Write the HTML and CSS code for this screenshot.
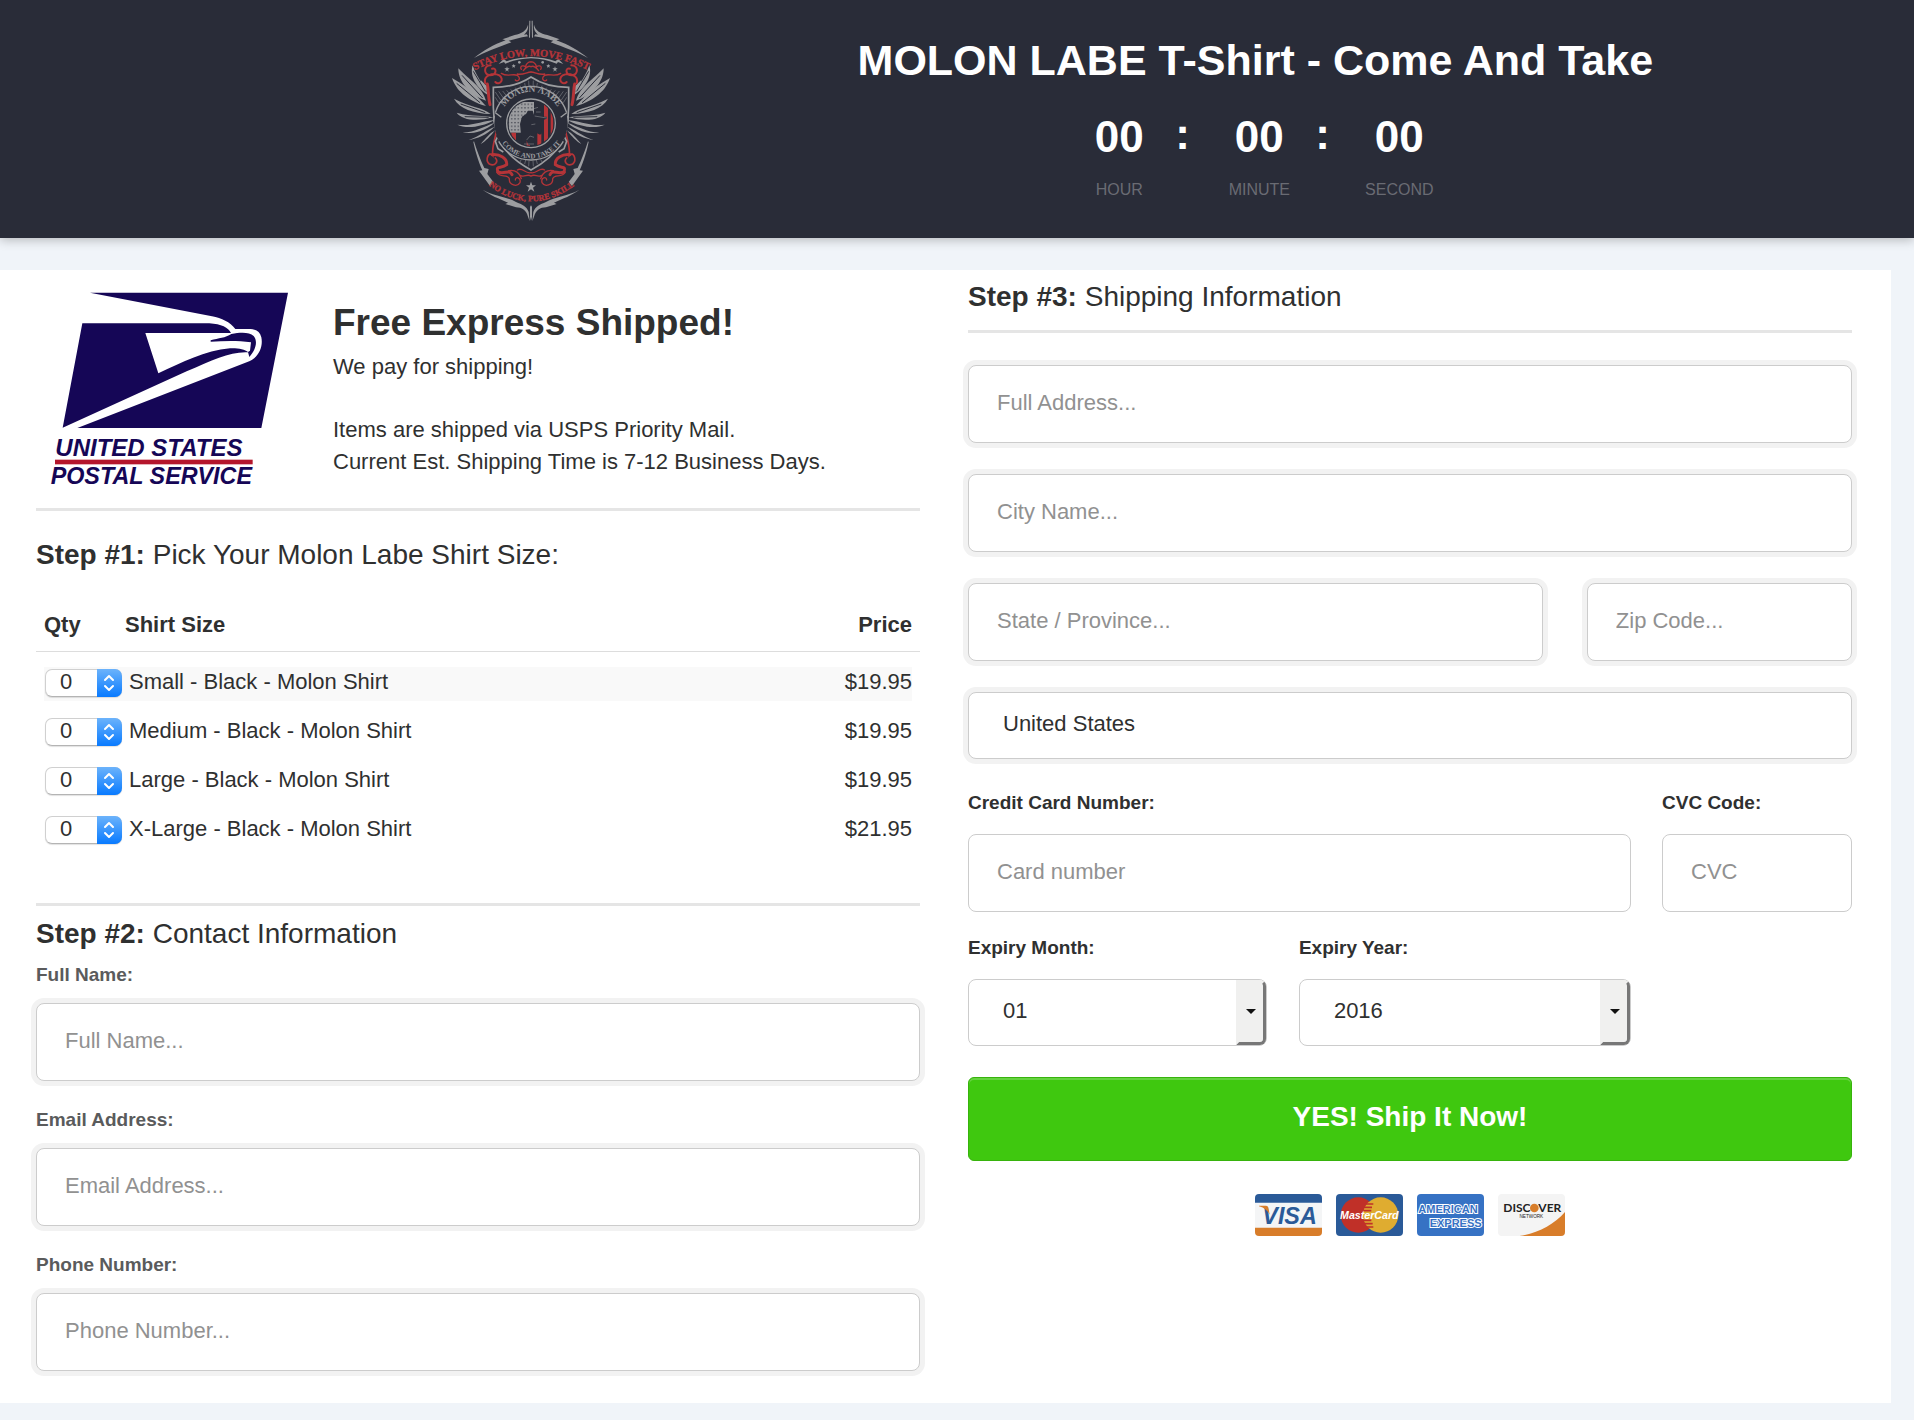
FILE: index.html
```html
<!DOCTYPE html>
<html lang="en">
<head>
    <meta charset="UTF-8">
    <meta name="viewport" content="width=device-width, initial-scale=1.0">
    <title>MOLON LABE T-Shirt - Come And Take</title>
    <link rel="stylesheet" href="styles.css">
</head>
<body>

    <!-- Header with crest and countdown -->
    <header class="site-header">
        <svg class="crest" viewBox="60 60 486 606" role="img" aria-label="Molon Labe crest">
            <defs>
                <path id="arc-top" d="M132 212 Q303 124 476 212"/>
                <path id="arc-bottom" d="M170 552 Q303 656 440 552"/>
                <path id="arc-molon" d="M214 344 A92 92 0 0 1 392 344"/>
                <path id="arc-come" d="M216 428 A106 106 0 0 0 392 428"/>
                <pattern id="stars" width="10" height="11" patternUnits="userSpaceOnUse">
                    <rect width="10" height="11" fill="#9c9da0"/>
                    <circle cx="5" cy="5" r="2" fill="#292c38"/>
                </pattern>
                <clipPath id="flag"><circle cx="303" cy="370" r="68"/></clipPath>
                <g id="crest-half">
                    <!-- spikes and frame -->
                    <g fill="#9c9da0">
                        <path d="M298 62 L301 62 L300 114 L297 112Z"/>
                        <path d="M294 74 C290 92 274 101 254 105 L217 118 L227 121 C190 134 160 152 132 174 C166 155 202 143 244 127 L236 122 L276 112 L294 109 L290 103 L282 104 C290 97 296 88 294 74Z"/>
                        <path d="M206 192 L221 177 L230 184 C250 176 275 172 303 171 V175 C275 176 250 181 226 191 L222 186Z"/>
                        <path d="M132 424 C140 450 152 482 163 504 L176 507 L172 522 L190 546 L180 558 L147 512 L157 511 C144 482 135 450 130 426Z"/>
                        <path d="M158 569 C190 588 232 590 258 606 C276 614 290 618 296 636 L299 664 L294 650 C288 630 276 622 258 622 L226 612 L234 608 C208 596 180 586 158 569Z"/>
                        <path d="M300 620 L303 616 V662 L300 650Z"/>
                        <path d="M231 199 l2 6 6 0 -5 4 2 6 -5-4 -5 4 2-6 -5-4 6 0Z"/>
                        <path d="M251 192 l2 4 4 0 -3 3 1 4 -4-2 -4 2 1-4 -3-3 4 0Z"/>
                        <circle cx="268" cy="187" r="4"/>
                    </g>
                    <!-- wing feathers -->
                    <g fill="#9c9da0">
                        <path d="M66 234 C76 266 108 302 168 318 C146 294 128 270 66 234Z"/>
                        <path d="M85 205 C84 246 122 288 168 302 C156 262 130 250 85 205Z"/>
                        <path d="M128 196 C118 228 140 264 172 284 C172 264 142 240 128 196Z"/>
                        <path d="M152 240 C152 260 164 272 176 276 L174 262Z"/>
                        <path d="M72 296 C88 326 130 340 182 342 C156 320 124 324 72 296Z"/>
                        <path d="M80 338 C96 360 140 366 190 352 C160 344 130 352 80 338Z"/>
                        <path d="M82 374 C106 386 150 384 194 360 C160 362 126 380 82 374Z"/>
                        <path d="M98 398 C120 402 160 398 194 368 C164 378 136 396 98 398Z"/>
                        <path d="M116 420 C140 416 172 404 194 380 C172 388 150 408 116 420Z"/>
                        <path d="M152 432 C166 424 182 408 194 392 C180 398 168 414 152 432Z"/>
                    </g>
                    <g fill="none" stroke="#292c38" stroke-width="3">
                        <path d="M80 250 L150 308M96 226 L158 294M130 214 L166 274M92 312 L166 338M104 350 L176 352"/>
                    </g>
                    <!-- scrollwork -->
                    <g fill="none" stroke="#b53438" stroke-width="6" stroke-linecap="round">
                        <path d="M182 196 C160 196 160 224 180 226 C200 226 202 202 186 206M166 250 C158 226 190 216 208 226 C226 240 206 258 196 246"/>
                        <path d="M172 252 C176 268 174 290 180 314" stroke-width="9"/>
                        <path d="M214 220 C232 232 248 220 262 226 C276 236 262 248 256 240M262 222 C280 226 290 216 303 216" stroke-width="4"/>
                        <path d="M274 208 C266 196 286 194 288 204 C284 188 303 184 303 186M280 212 C290 200 296 196 303 200" stroke-width="4"/>
                        <path d="M200 360 C206 400 184 430 188 466 C176 452 164 480 178 492 C196 500 206 484 196 474" stroke-width="5"/>
                        <path d="M186 464 C210 462 232 474 230 494 C214 508 196 494 204 516 C224 524 238 506 246 524" stroke-width="9"/>
                        <path d="M200 516 C210 536 232 520 238 536 C236 556 262 562 270 548 C274 532 256 528 256 540M236 512 C256 508 270 520 274 536 M262 510 C278 500 284 522 303 518" stroke-width="4"/>
                        <path d="M270 526 C284 534 290 520 303 528" stroke-width="4"/>
                    </g>
                    <!-- shield rays -->
                    <path d="M196 276 L212 300M206 274 L220 294M218 273 L230 288M230 271 L240 283M242 268 L250 278M256 263 L262 273M270 257 L274 269M284 249 L287 266M296 242 L297 264M270 486 L274 478M284 492 L287 480M296 499 L297 482M196 292 L206 308" stroke="#5f626a" stroke-width="3"/>
                    <path d="M210 362 L192 350 V366 L212 376M212 384 L198 392 L208 400 L196 424 L204 446 L220 456" fill="none" stroke="#9c9da0" stroke-width="5"/>
                </g>
            </defs>
            <use href="#crest-half"/>
            <use href="#crest-half" transform="translate(606) scale(-1 1)"/>
            <path d="M190 262 C232 262 275 250 303 231 C331 250 374 262 416 262 V322 C414 410 392 462 303 510 C214 462 192 410 190 322Z" fill="none" stroke="#9c9da0" stroke-width="5"/>
            <circle cx="303" cy="370" r="110" fill="#292c38"/>
            <path d="M196 338 A112 112 0 0 1 410 338" fill="none" stroke="#9c9da0" stroke-width="4"/>
            <path d="M196 338 L214 352M410 338 L392 352" stroke="#9c9da0" stroke-width="4"/>
            <path d="M206 424 A112 112 0 0 0 400 424" fill="none" stroke="#9c9da0" stroke-width="4"/>
            <circle cx="303" cy="370" r="73" fill="#292c38" stroke="#9c9da0" stroke-width="4"/>
            <g clip-path="url(#flag)">
                <rect x="236" y="306" width="76" height="92" fill="url(#stars)"/>
                <path d="M244 398 h14 v40 h-14zM342 314 h12 v124 h-12zM362 318 h8 v120 h-8zM322 396 h12 v44 h-12zM290 400 h10 v40 h-10z" fill="#b53438"/>
                <path d="M276 436 L270 372 L276 350 L288 342 L294 332 L308 332 L312 344 L330 350 L350 350 V356 L334 362 L332 374 L336 400 L330 404 L318 398 L314 432 L296 436 L288 420Z" fill="#292c38"/>
                <path d="M312 326 L324 322 M318 336 H332 M304 374 L316 372 M314 348 L350 354 M290 420 L300 408 L312 412 M282 432 H312" fill="none" stroke="#7f8187" stroke-width="2"/>
            </g>
            <path d="M303 545 l4 11 11 0 -9 7 4 12 -10-7 -10 7 4-12 -9-7 11 0Z" fill="#9c9da0"/>
            <text class="crest-text crest-motto"><textPath href="#arc-top" startOffset="50%">STAY LOW, MOVE FAST</textPath></text>
            <text class="crest-text crest-luck"><textPath href="#arc-bottom" startOffset="50%">NO LUCK, PURE SKILL</textPath></text>
            <text class="crest-text crest-molon"><textPath href="#arc-molon" startOffset="50%">ΜΟΛΩΝ ΛΑΒΕ</textPath></text>
            <text class="crest-text crest-come"><textPath href="#arc-come" startOffset="50%">COME AND TAKE IT</textPath></text>
        </svg>

        <div class="header-info">
            <h1>MOLON LABE T-Shirt - Come And Take</h1>
            <div class="countdown">
                <div class="unit"><span class="digits">00</span><span class="caption">HOUR</span></div>
                <div class="colon">:</div>
                <div class="unit"><span class="digits">00</span><span class="caption">MINUTE</span></div>
                <div class="colon">:</div>
                <div class="unit"><span class="digits">00</span><span class="caption">SECOND</span></div>
            </div>
        </div>
    </header>

    <form class="order-form">

        <!-- Left column: shipping note, sizes, contact -->
        <div class="column">
            <div class="shipping-note">
                <svg class="usps" viewBox="144 96 744 588" role="img" aria-label="United States Postal Service">
                    <g fill="#150656">
                        <path d="M270 98 H864 L784 504 H232 L742 306 C776 294 790 260 784 232 C779 213 766 207 746 207 H706 C690 186 665 175 636 169Z"/>
                        <path d="M247 190 H628 C664 192 685 203 693 219 H436 L475 340 C548 306 614 272 690 265 C714 264 734 268 745 277 C690 274 640 300 560 334 L188 503Z"/>
                        <path d="M632 241 C656 234 676 234 694 222 C722 217 748 216 761 228 C775 244 766 272 748 291 L744 276 L750 272 L753 247 C712 241 672 243 632 245Z"/>
                    </g>
                    <rect x="165" y="599" width="593" height="14" fill="#b4162c"/>
                    <text class="usps-text usps-first" x="166" y="588">UNITED STATES</text>
                    <text class="usps-text usps-second" x="152" y="673">POSTAL SERVICE</text>
                </svg>
                <div class="shipping-text">
                    <h2>Free Express Shipped!</h2>
                    <p>We pay for shipping!</p>
                    <p>Items are shipped via USPS Priority Mail.<br>Current Est. Shipping Time is 7-12 Business Days.</p>
                </div>
            </div>
            <hr>

            <h3 class="step-sizes"><strong>Step #1:</strong> Pick Your Molon Labe Shirt Size:</h3>
            <table class="sizes">
                <thead>
                    <tr><th class="qty">Qty</th><th>Shirt Size</th><th class="price">Price</th></tr>
                </thead>
                <tbody>
                    <tr>
                        <td class="qty"><div class="qty-select"><select id="qty-small"><option>0</option><option>1</option><option>2</option></select></div></td>
                        <td><label for="qty-small">Small - Black - Molon Shirt</label></td>
                        <td class="price"><span>$19.95</span></td>
                    </tr>
                    <tr>
                        <td class="qty"><div class="qty-select"><select id="qty-medium"><option>0</option><option>1</option><option>2</option></select></div></td>
                        <td><label for="qty-medium">Medium - Black - Molon Shirt</label></td>
                        <td class="price"><span>$19.95</span></td>
                    </tr>
                    <tr>
                        <td class="qty"><div class="qty-select"><select id="qty-large"><option>0</option><option>1</option><option>2</option></select></div></td>
                        <td><label for="qty-large">Large - Black - Molon Shirt</label></td>
                        <td class="price"><span>$19.95</span></td>
                    </tr>
                    <tr>
                        <td class="qty"><div class="qty-select"><select id="qty-xlarge"><option>0</option><option>1</option><option>2</option></select></div></td>
                        <td><label for="qty-xlarge">X-Large - Black - Molon Shirt</label></td>
                        <td class="price"><span>$21.95</span></td>
                    </tr>
                </tbody>
            </table>
            <hr>

            <h3 class="step-contact"><strong>Step #2:</strong> Contact Information</h3>
            <div class="contact">
                <div class="field">
                    <label for="name">Full Name:</label>
                    <input type="text" class="glow" id="name" name="name" placeholder="Full Name...">
                </div>
                <div class="field">
                    <label for="email">Email Address:</label>
                    <input type="email" class="glow" id="email" name="email" placeholder="Email Address...">
                </div>
                <div class="field">
                    <label for="phone">Phone Number:</label>
                    <input type="tel" class="glow" id="phone" name="phone" placeholder="Phone Number...">
                </div>
            </div>
        </div>

        <!-- Right column: shipping address and payment -->
        <div class="column">
            <h3 class="step-shipping"><strong>Step #3:</strong> Shipping Information</h3>
            <hr>
            <div class="address">
                <input type="text" class="glow" name="address" placeholder="Full Address..." aria-label="Full Address">
                <input type="text" class="glow" name="city" placeholder="City Name..." aria-label="City Name">
                <div class="state-zip">
                    <input type="text" class="glow" name="state" placeholder="State / Province..." aria-label="State / Province">
                    <input type="text" class="glow" name="zip" placeholder="Zip Code..." aria-label="Zip Code">
                </div>
                <select class="glow" name="country" aria-label="Country">
                    <option>United States</option>
                    <option>Canada</option>
                </select>
            </div>

            <div class="payment">
                <div class="card-row">
                    <div class="field">
                        <label for="card">Credit Card Number:</label>
                        <input type="text" id="card" name="card" placeholder="Card number">
                    </div>
                    <div class="field">
                        <label for="cvc">CVC Code:</label>
                        <input type="text" id="cvc" name="cvc" placeholder="CVC">
                    </div>
                </div>
                <div class="expiry-row">
                    <div class="field">
                        <label for="month">Expiry Month:</label>
                        <div class="expiry-select">
                            <select id="month" name="month"><option>01</option><option>02</option><option>03</option></select>
                        </div>
                    </div>
                    <div class="field">
                        <label for="year">Expiry Year:</label>
                        <div class="expiry-select">
                            <select id="year" name="year"><option>2016</option><option>2017</option><option>2018</option></select>
                        </div>
                    </div>
                </div>
            </div>

            <button type="submit" class="ship-button">YES! Ship It Now!</button>

            <div class="cards">
                <svg viewBox="0 0 201 126" role="img" aria-label="Visa">
                    <rect width="201" height="126" rx="12" fill="#f4f5f6"/>
                    <path d="M0 26 V12 A12 12 0 0 1 12 0 H189 A12 12 0 0 1 201 12 V26Z" fill="#2a5a98"/>
                    <path d="M0 101 V114 A12 12 0 0 0 12 126 H189 A12 12 0 0 0 201 114 V101Z" fill="#d87d2a"/>
                    <text class="visa" x="22" y="90">VISA</text>
                    <path d="M12 35 H32 C39 35 40 40 41 46 L44 62 C38 50 28 41 12 37Z" fill="#d87d2a"/>
                </svg>
                <svg viewBox="0 0 201 126" role="img" aria-label="MasterCard">
                    <rect width="201" height="126" rx="12" fill="#2a5a98"/>
                    <circle cx="67" cy="63" r="53" fill="#c03028"/>
                    <circle cx="134" cy="63" r="53" fill="#dfac30"/>
                    <path d="M90 30 H112M84 40 H108M82 50 H106M82 79 H106M84 89 H110M90 99 H112" stroke="#c03028" stroke-width="5"/>
                    <text class="mastercard" x="100" y="74">MasterCard</text>
                </svg>
                <svg viewBox="0 0 201 126" role="img" aria-label="American Express">
                    <rect width="201" height="126" rx="12" fill="#3672c4"/>
                    <text class="amex-text" x="4" y="57">AMERICAN</text>
                    <text class="amex-text" x="38" y="99">EXPRESS</text>
                </svg>
                <svg viewBox="0 0 201 126" role="img" aria-label="Discover Network">
                    <rect width="201" height="126" rx="12" fill="#f4f4f4"/>
                    <path d="M201 54 V114 A12 12 0 0 1 189 126 H64 C118 118 168 92 201 54Z" fill="#d87d2a"/>
                    <text class="discover-text" x="16" y="55">DISC</text>
                    <circle cx="109" cy="42" r="13" fill="#d87d2a"/>
                    <text class="discover-text" x="121" y="55">VER</text>
                    <text class="network-text" x="100" y="72">NETWORK</text>
                </svg>
            </div>
        </div>
    </form>

</body>
</html>
```
FILE: styles.css
```css
* {
    box-sizing: border-box;
}

body {
    margin: 0;
    min-height: 100vh;
    font-family: "Liberation Sans", Arial, Helvetica, sans-serif;
    font-size: 22px;
    line-height: 32px;
    color: #2f3030;
    background-color: #f0f4f9;
}

h1, h2, h3, p {
    margin: 0;
}

/* Header */
.site-header {
    display: grid;
    grid-template-columns: 1fr 2fr;
    padding: 20px 176px 16px 290px;
    background-color: #292c38;
    box-shadow: 0 2px 10px rgba(0, 0, 0, 0.25);
}

.crest {
    width: 162px;
    height: 202px;
    justify-self: center;
}

.crest-text {
    font-family: "Liberation Serif", serif;
    font-weight: bold;
    text-anchor: middle;
    fill: #9c9da0;
}

.crest-motto, .crest-luck {
    fill: #b53438;
    stroke: #b53438;
    stroke-width: 1px;
}

.crest-motto {
    font-size: 31px;
}

.crest-luck {
    font-size: 25px;
}

.crest-molon {
    font-size: 28px;
}

.crest-come {
    font-size: 21px;
}

.header-info {
    padding-top: 13px;
    text-align: center;
    color: #fff;
}

h1 {
    font-size: 43px;
    line-height: 54px;
}

.countdown {
    display: flex;
    justify-content: center;
    padding: 22px 0 0 8px;
}

.unit {
    width: 112px;
}

.digits, .caption {
    display: block;
}

.digits, .colon {
    font-size: 44px;
    font-weight: bold;
    line-height: 56px;
}

.colon {
    width: 28px;
    text-align: left;
    line-height: 50px;
}

.caption {
    margin-top: 13px;
    font-size: 16px;
    line-height: 24px;
    color: #696b73;
}

/* Order form */
.order-form {
    display: grid;
    grid-template-columns: 1fr 1fr;
    gap: 48px;
    margin: 32px 23px 0 0;
    padding: 0 39px 32px 36px;
    background-color: #fff;
}

.column {
    min-width: 0;
}

hr {
    height: 3px;
    margin: 0;
    border: none;
    background-color: #e5e5e5;
}

h3 {
    font-size: 28px;
    font-weight: normal;
    line-height: 36px;
}

.shipping-note {
    display: flex;
    gap: 37px;
    padding: 22px 0 20px 12px;
}

.usps {
    width: 248px;
    height: 196px;
    flex-shrink: 0;
}

.usps-text {
    font-weight: bold;
    font-style: italic;
    fill: #150656;
}

.usps-first {
    font-size: 72px;
}

.usps-second {
    font-size: 70px;
}

.shipping-text {
    padding-top: 11px;
}

.shipping-text p + p {
    margin-top: 31px;
}

h2 {
    margin-bottom: 8px;
    font-size: 37px;
    line-height: 40px;
}

.step-sizes {
    margin: 26px 0 36px;
}

/* Shirt sizes */
.sizes {
    width: 100%;
    margin-bottom: 55px;
    border-collapse: collapse;
}

.sizes th {
    padding: 0 0 10px;
    text-align: left;
    border-bottom: 1px solid #ddd;
}

.sizes td {
    padding: 15px 0 0;
    background-clip: content-box;
}

.sizes tbody tr:first-child td {
    background-color: #f9f9f9;
}

.sizes .qty {
    width: 89px;
    padding-left: 8px;
}

.sizes .price {
    padding-right: 8px;
    text-align: right;
}

.sizes label, .price span {
    display: block;
    padding: 0 0 4px 4px;
    line-height: 30px;
}

.price span {
    padding-left: 0;
}

.qty-select {
    position: relative;
    width: 77px;
    margin: 2px 0 4px 1px;
}

.qty-select select {
    display: block;
    width: 100%;
    height: 28px;
    padding: 0 0 3px 14px;
    appearance: none;
    border: 1px solid #d0d0d0;
    border-bottom-color: #b4b4b4;
    border-radius: 7px;
    background-color: #fff;
    color: #2f3030;
    font: inherit;
    line-height: 24px;
    box-shadow: 0 1px 1px rgba(0, 0, 0, 0.12);
}

/* Blue stepper with up and down chevrons */
.qty-select::after {
    content: "";
    position: absolute;
    top: 0;
    right: 0;
    width: 25px;
    height: 28px;
    border-radius: 0 7px 7px 0;
    background: url("data:image/svg+xml,%3Csvg xmlns='http://www.w3.org/2000/svg' width='25' height='28' fill='none' stroke='white' stroke-width='2' stroke-linecap='round' stroke-linejoin='round'%3E%3Cpath d='M8 11l4-4 4 4M8 17l4 4 4-4'/%3E%3C/svg%3E"), linear-gradient(#6cb3fb, #087aff);
    pointer-events: none;
}

/* Fields */
input, .address select, .expiry-select select {
    display: block;
    width: 100%;
    min-width: 0;
    height: 78px;
    padding: 0 28px 3px;
    border: 1px solid #ccc;
    border-radius: 8px;
    background-color: #fff;
    color: #2f3030;
    font: inherit;
}

.address select, .expiry-select select {
    height: 67px;
    padding: 0 34px 4px;
    appearance: none;
}

input::placeholder {
    color: #919191;
    opacity: 1;
}

.address .glow, .contact .glow {
    box-shadow: 0 0 0 5px #f2f2f2;
}

.field label {
    display: block;
    margin-bottom: 19px;
    font-size: 19px;
    font-weight: bold;
    line-height: 24px;
}

.step-contact {
    margin: 10px 0 11px;
}

.contact {
    display: grid;
    gap: 27px;
}

.contact label {
    margin-bottom: 16px;
    color: #5a5b5c;
}

.step-shipping {
    margin: 9px 0 15px;
}

.address {
    display: grid;
    gap: 31px;
    margin: 32px 0;
}

.state-zip {
    display: grid;
    grid-template-columns: 65% 30%;
    justify-content: space-between;
}

.card-row {
    display: grid;
    grid-template-columns: 1fr 190px;
    gap: 31px;
    margin-bottom: 24px;
}

.expiry-row {
    display: grid;
    grid-template-columns: 9fr 10fr;
    gap: 32px;
    width: 75%;
}

.expiry-select {
    position: relative;
}

/* Bevelled drop-down button */
.expiry-select::before {
    content: "";
    position: absolute;
    top: 1px;
    right: 1px;
    bottom: 1px;
    width: 24px;
    border: 3px solid #777;
    border-top-color: #f0f0ef;
    border-left-color: #f0f0ef;
    border-radius: 0 6px 6px 0;
    background-color: #f0f0ef;
    pointer-events: none;
}

.expiry-select::after {
    content: "";
    position: absolute;
    top: 30px;
    right: 11px;
    border: 5px solid transparent;
    border-top-color: #111;
    border-bottom: none;
    pointer-events: none;
}

.ship-button {
    display: block;
    width: 100%;
    height: 84px;
    margin: 31px 0 33px;
    padding: 0 0 5px;
    border: 1px solid #37b30c;
    border-radius: 6px;
    background-color: #3fc80f;
    box-shadow: inset 0 2px 0 #65d33f;
    color: #fff;
    font-family: inherit;
    font-size: 28px;
    font-weight: bold;
    cursor: pointer;
}

.ship-button:hover {
    background-color: #39b80d;
}

/* Accepted cards */
.cards {
    display: flex;
    justify-content: center;
    gap: 14px;
}

.cards svg {
    width: 67px;
    height: 42px;
}

.visa {
    font-size: 70px;
    font-weight: bold;
    font-style: italic;
    fill: #2a5a98;
}

.mastercard {
    font-size: 32px;
    font-weight: bold;
    font-style: italic;
    text-anchor: middle;
    fill: #fff;
}

.amex-text {
    font-size: 33px;
    font-weight: bold;
    fill: #3672c4;
    stroke: #fff;
    stroke-width: 6px;
    paint-order: stroke;
}

.discover-text {
    font-family: Lato, sans-serif;
    font-size: 36px;
    font-weight: bold;
    fill: #222;
}

.network-text {
    font-size: 14px;
    text-anchor: middle;
    fill: #222;
}
```
